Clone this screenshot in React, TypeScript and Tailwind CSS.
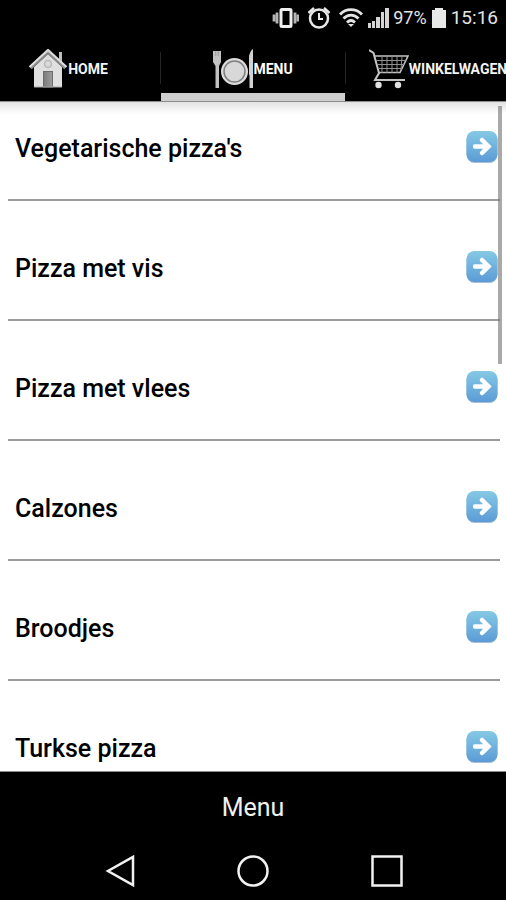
import React from "react";

const categories = [
  "Vegetarische pizza's",
  "Pizza met vis",
  "Pizza met vlees",
  "Calzones",
  "Broodjes",
  "Turkse pizza",
];

function HouseIcon() {
  return (
    <svg className="h-10 w-10 shrink-0" viewBox="0 0 40 40" aria-hidden="true">
      <defs>
        <linearGradient id="door" x1="0" x2="1" y1="0" y2="0">
          <stop offset="0" stopColor="#7a7a7a" />
          <stop offset="1" stopColor="#9c9c9c" />
        </linearGradient>
      </defs>
      <path d="M31 3h3v12l-3-3z" fill="#bdbdbd" />
      <path d="M6 18 20 5l14 13v20H6z" fill="#e0e0e0" />
      <path d="M2.500 19 20 3l17.500 16" fill="none" stroke="#8c8c8c" strokeWidth="3.500" />
      <path d="M1.500 18 20 1l18.500 17" fill="none" stroke="#dedede" strokeWidth="2.200" />
      <circle cx="20" cy="15" r="3.500" fill="#dadada" stroke="#b8b8b8" strokeWidth="1.500" />
      <rect x="15.500" y="22.500" width="9" height="15.500" fill="url(#door)" stroke="#6c6c6c" />
      <path d="M6 38h28" stroke="#aaa" />
    </svg>
  );
}

function PlateIcon() {
  return (
    <svg className="h-10 w-10 shrink-0" viewBox="0 0 40 40" aria-hidden="true">
      <path d="M0 2h8v11l-2 4v22H2.500V17L0 13z" fill="#c2c2c2" />
      <path d="M2.700 2v5M5.300 2v5" stroke="#8c8c8c" strokeWidth="0.700" />
      <circle cx="21.500" cy="22.500" r="13.500" fill="#dcdcdc" />
      <circle cx="21.500" cy="22.500" r="10.500" fill="#d8d8d8" stroke="#808080" strokeWidth="1.500" />
      <path d="M40 0v39h-3.500V26H36V9c0-4 2-8 4-9z" fill="#d2d2d2" />
    </svg>
  );
}

function CartIcon() {
  return (
    <svg className="h-10 w-10 shrink-0" viewBox="0 0 40 40" fill="none" aria-hidden="true">
      <path d="M0 1 4.500 4 10 24l-4 7h30" stroke="#c4c4c4" strokeWidth="2" />
      <path d="M6 7h33l-8 16.500H10" stroke="#c4c4c4" strokeWidth="1.600" />
      <path d="M7 11.500h30M8 15.500h27M9 19.500h24M13 7v17M18 7v17M23 7v17M28 7v17M33 7l-1 14" stroke="#909090" />
      <circle cx="9.500" cy="36" r="3.200" fill="#e2e2e2" />
      <circle cx="29" cy="36" r="3.200" fill="#e2e2e2" />
    </svg>
  );
}

function ArrowIcon() {
  return (
    <svg className="mb-1 h-8 w-8 shrink-0" viewBox="0 0 32 32" aria-hidden="true">
      <defs>
        <linearGradient id="tile" x1="0" x2="0" y1="0" y2="1">
          <stop offset="0" stopColor="#85c9e4" />
          <stop offset="1" stopColor="#5c9bd6" />
        </linearGradient>
      </defs>
      <rect x="0.500" y="1" width="31" height="31" rx="8" fill="#4c80ae" opacity="0.500" />
      <rect x="0.500" y="0" width="31" height="31" rx="8" fill="url(#tile)" />
      <path d="M9 15.500h13M16 9l6.500 6.500L16 22" fill="none" stroke="#fff" strokeWidth="4.500" strokeLinejoin="miter" strokeLinecap="round" />
    </svg>
  );
}

function StatusBar() {
  return (
    <div className="flex h-9 shrink-0 items-center justify-end gap-1 pr-2 text-lg text-[#e4e4e4]">
      <svg className="h-6 w-7" viewBox="0 0 28 24" fill="none" aria-hidden="true">
        <path d="M3 8.500v7M6 6.500v11M24 6.500v11M27 8.500v7" stroke="#b4b4b4" strokeWidth="2.800" />
        <rect x="10" y="3.500" width="10" height="17" rx="1" stroke="#eee" strokeWidth="3" />
      </svg>
      <svg className="ml-1 h-6 w-6" viewBox="0 0 24 24" fill="none" stroke="#e8e8e8" aria-hidden="true">
        <circle cx="12" cy="12.500" r="9" strokeWidth="2.500" />
        <path d="M12 7v6h4" strokeWidth="2" />
        <path d="M1.500 7 7 2M22.500 7 17 2" strokeWidth="2.500" />
      </svg>
      <svg className="ml-1 h-6 w-6" viewBox="0 0 24 24" fill="none" stroke="#e4e4e4" strokeWidth="2.800" aria-hidden="true">
        <path d="M1 8.500c6-6.500 16-6.500 22 0M4.500 12.500c4.500-4.500 10.500-4.500 15 0M8 16.500c2.500-2.500 5.500-2.500 8 0" />
        <path d="m9 18 3 3 3-3z" fill="#e4e4e4" stroke="none" />
      </svg>
      <svg className="h-6 w-[22px]" viewBox="0 0 22 24" fill="#d4d4d4" aria-hidden="true">
        <path d="M1 17h3v5H1zM5 15h3v7H5zM9 11h4v11H9zM14 6h3v16h-3zM18 2h4v20h-4z" />
      </svg>
      <span>97%</span>
      <svg className="h-6 w-4" viewBox="0 0 16 24" fill="#e8e8e8" aria-hidden="true">
        <path d="M4 2h8v2h3v18H1V4h3z" />
      </svg>
      <span className="text-[19px]">15:16</span>
    </div>
  );
}

function Tab({ label, icon, active = false }: { label: string; icon: React.ReactNode; active?: boolean }) {
  return (
    <button
      type="button"
      role="tab"
      aria-selected={active}
      className={`flex h-[65px] w-[184px] shrink-0 flex-col ${active ? "text-white" : "text-[#f4f4f4]"}`}
    >
      <span className="flex h-[65px] w-full shrink-0 items-center justify-center text-sm font-bold">
        {icon}
        {label}
      </span>
      {active && <span className="-mt-2 h-2 w-full shrink-0 bg-[#cecece]" />}
    </button>
  );
}

function Divider() {
  return <span className="mt-4 h-8 w-px shrink-0 bg-[#252525]" />;
}

export default function App() {
  return (
    <div className="flex h-screen flex-col overflow-hidden bg-black font-['Roboto',sans-serif]">
      <StatusBar />
      <div role="tablist" className="flex h-[65px] shrink-0 justify-center overflow-hidden">
        <Tab label="HOME" icon={<HouseIcon />} />
        <Divider />
        <Tab label="MENU" icon={<PlateIcon />} active />
        <Divider />
        <Tab label="WINKELWAGEN" icon={<CartIcon />} />
      </div>
      <main className="relative min-h-0 flex-1 overflow-hidden border-y border-[#8c8c8c] bg-white bg-linear-to-b from-[#e2e2e2] to-white to-[12px]">
        <ul className="mr-1.5 ml-2">
          {categories.map((name) => (
            <li key={name} className="border-b-2 border-[#9c9c9c] pt-12 pb-[30px] first:pt-[27px]">
              <a href="#" className="flex h-10 items-center justify-between pr-0.5 pl-[7px] text-[25px] font-medium text-black">
                {name}
                <ArrowIcon />
              </a>
            </li>
          ))}
        </ul>
        <span className="absolute top-1 right-1 h-[258px] w-1 bg-[#7b7b7b]/65" />
      </main>
      <div className="flex h-[70px] shrink-0 items-center justify-center pt-0.5">
        <button type="button" className="text-[25px] text-[#f0f0f0]">Menu</button>
      </div>
      <nav className="flex h-[58px] shrink-0 items-center justify-center gap-[100px]">
        <button type="button" aria-label="Terug">
          <svg className="h-[34px] w-[34px]" viewBox="0 0 34 34" fill="none" stroke="#f2f2f2" strokeWidth="2.500">
            <path d="M31 3v28L6 17z" />
          </svg>
        </button>
        <button type="button" aria-label="Start">
          <svg className="h-[34px] w-[34px]" viewBox="0 0 34 34" fill="none" stroke="#f2f2f2" strokeWidth="2.500">
            <circle cx="17" cy="17" r="14.500" />
          </svg>
        </button>
        <button type="button" aria-label="Recente apps">
          <svg className="h-[34px] w-[34px]" viewBox="0 0 34 34" fill="none" stroke="#f2f2f2" strokeWidth="2.500">
            <rect x="2.500" y="2.500" width="29" height="29" />
          </svg>
        </button>
      </nav>
    </div>
  );
}
